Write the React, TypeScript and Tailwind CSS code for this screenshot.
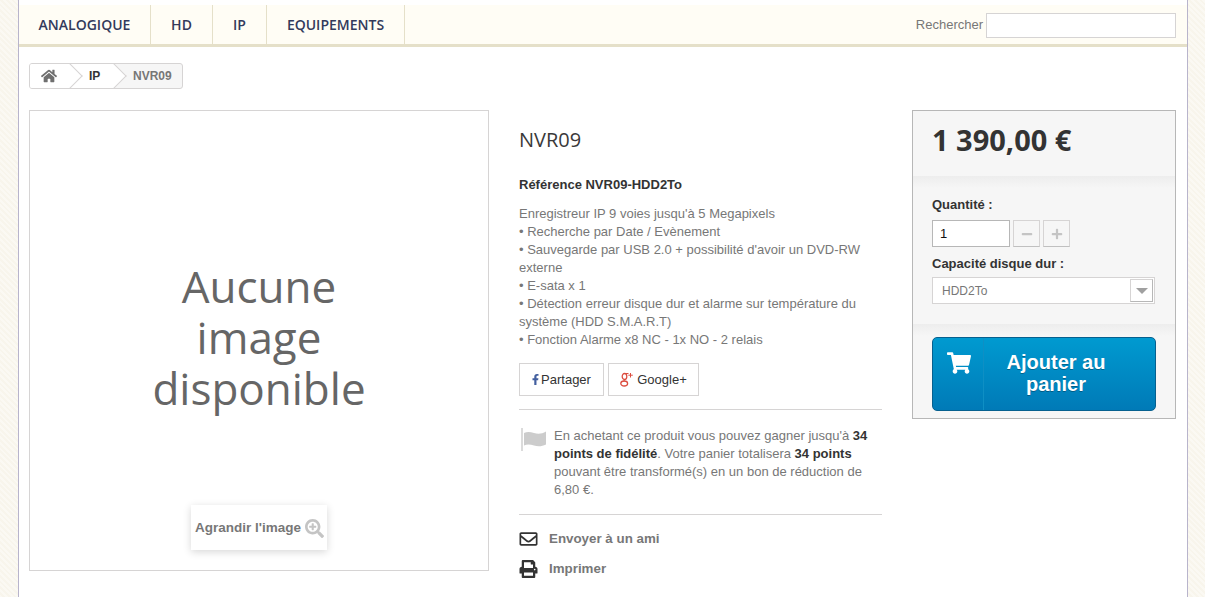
import React from 'react'
import {
  FaHome,
  FaShoppingCart,
  FaFacebookF,
  FaRegEnvelope,
  FaPrint,
  FaSearchPlus,
  FaMinus,
  FaPlus,
} from 'react-icons/fa'

const navItems = [
  { label: 'ANALOGIQUE', width: 'w-[132px]' },
  { label: 'HD', width: 'w-[62px]' },
  { label: 'IP', width: 'w-[54px]' },
  { label: 'EQUIPEMENTS', width: 'w-[138px]' },
]

const description = [
  'Enregistreur IP 9 voies jusqu\'à 5 Megapixels',
  '• Recherche par Date / Evènement',
  '• Sauvegarde par USB 2.0 + possibilité d\'avoir un DVD-RW externe',
  '• E-sata x 1',
  '• Détection erreur disque dur et alarme sur température du système (HDD S.M.A.R.T)',
  '• Fonction Alarme x8 NC - 1x NO - 2 relais',
]

const Nav = () => (
  <div className="flex h-[42px] items-stretch justify-between border-b-[3px] border-[#e5e0c9] bg-[#fffdf5]">
    <ul className="flex">
      {navItems.map((item) => (
        <li
          key={item.label}
          className={`${item.width} flex items-center justify-center border-r border-[#e5e0c9] font-['Open_Sans',sans-serif] text-[14px] font-semibold text-[#333a5c]`}
        >
          {item.label}
        </li>
      ))}
    </ul>
    <div className="mr-[11px] flex items-center gap-[3px] pt-px">
      <span className="text-[13px] text-[#777777]">Rechercher</span>
      <input className="h-[25px] w-[190px] border border-[#d6d4d4] bg-white" />
    </div>
  </div>
)

const Crumb = ({ children, className }: { children: React.ReactNode; className: string }) => (
  <div className={`relative flex h-full items-center ${className}`}>
    {children}
    <span className="absolute right-[-8px] top-[3px] z-10 h-[18px] w-[18px] rotate-45 border-r border-t border-[#d6d4d4] bg-white" />
  </div>
)

const Breadcrumb = () => (
  <div className="mt-[16px] flex h-[26px] w-[154px] items-center overflow-hidden rounded-[3px] border border-[#d6d4d4] bg-[#f6f6f6] text-[12px] font-bold">
    <Crumb className="w-[41px] bg-white pl-[11px] text-[#6f6f6f]">
      <FaHome className="h-[16px] w-[16px]" />
    </Crumb>
    <Crumb className="w-[44px] bg-white pl-[18px] text-[#333333]">IP</Crumb>
    <span className="pl-[18px] text-[#777777]">NVR09</span>
  </div>
)

const ImageColumn = () => (
  <div className="relative flex h-[461px] w-[460px] flex-none items-center justify-center border border-[#d6d4d4] bg-white pb-[7px]">
    <div className="text-center font-['Open_Sans',sans-serif] text-[44px] leading-[51px] text-[#666666]">
      Aucune
      <br />
      image
      <br />
      disponible
    </div>
    <div className="absolute bottom-[20px] left-[161px] flex h-[45px] w-[136px] items-center justify-center gap-[4px] bg-white pl-px pt-px text-[13.5px] font-bold text-[#777777] shadow-[0_2px_8px_rgba(0,0,0,0.16)]">
      Agrandir l'image
      <FaSearchPlus className="h-[19px] w-[19px] text-[#c4c4c4]" />
    </div>
  </div>
)

const FlagIcon = () => (
  <svg viewBox="0 0 27 26" className="h-[26px] w-[27px] flex-none text-[#cccccc]" fill="currentColor">
    <rect x="2" y="1" width="2" height="23" opacity="0.7" />
    <path d="M5 6c3-1.400 6-1.200 10 0 4 1.300 8 1 12-1.500v13c-4 2-8 2.300-12 1-4-1.200-7-1.400-10 0z" />
  </svg>
)

// the old serif g+ mark, none of the icon packs has it
const GooglePlusIcon = () => (
  <svg viewBox="0 0 13 15" className="h-[15px] w-[13px] flex-none text-[#dc4e41]" fill="none" stroke="currentColor">
    <ellipse cx="4.500" cy="4.500" rx="2.300" ry="3" strokeWidth="1.300" />
    <ellipse cx="4.200" cy="11.500" rx="3.400" ry="2.500" strokeWidth="1.300" />
    <path d="M4.500 7.500c-1 .8-.6 1.300.4 1.700M5.500 1.500h3" strokeWidth="1" />
    <path d="M10.500 1v4.500M8.300 3.200h4.500" strokeWidth="1" />
  </svg>
)

const InfoColumn = () => (
  <div className="ml-[30px] w-[363px] flex-none text-[13px] leading-[18px] text-[#777777]">
    <h1 className="mt-[15px] font-['Open_Sans',sans-serif] text-[20px] leading-[30px] text-[#3a3939]">NVR09</h1>
    <p className="mt-[21px] font-bold text-[#333333]">Référence NVR09-HDD2To</p>
    <div className="mt-[11px]">
      {description.map((line) => (
        <div key={line}>{line}</div>
      ))}
    </div>
    <div className="mt-[14px] flex gap-[4px] border-b border-[#d6d4d4] pb-[13px]">
      <button className="flex h-[33px] w-[85px] items-center justify-center gap-[2px] border border-[#d6d4d4] text-[#333333]">
        <FaFacebookF className="h-[13px] w-[7px] text-[#435f9f]" />
        Partager
      </button>
      <button className="flex h-[33px] w-[91px] items-center justify-center gap-[4px] border border-[#d6d4d4] text-[#333333]">
        <GooglePlusIcon />
        Google+
      </button>
    </div>
    <div className="flex gap-[8px] border-b border-[#d6d4d4] pb-[15px] pt-[17px]">
      <FlagIcon />
      <p>
        En achetant ce produit vous pouvez gagner jusqu'à <b className="text-[#333333]">34 points de fidélité</b>. Votre
        panier totalisera <b className="text-[#333333]">34 points</b> pouvant être transformé(s) en un bon de réduction
        de 6,80 €.
      </p>
    </div>
    <div className="mt-[15px] flex items-center gap-[11px] text-[13.35px] font-bold">
      <FaRegEnvelope className="h-[18px] w-[19px] text-[#333333]" />
      Envoyer à un ami
    </div>
    <div className="mt-[12px] flex items-center gap-[11px] text-[13.35px] font-bold">
      <FaPrint className="h-[18px] w-[19px] text-[#333333]" />
      Imprimer
    </div>
  </div>
)

const StepButton = ({ children }: { children: React.ReactNode }) => (
  <span className="flex h-[27px] w-[27px] items-center justify-center border border-[#d6d4d4] border-b-[#c0c0c0] bg-[#f6f6f6] text-[#c4c4c4]">
    {children}
  </span>
)

const BuyBox = () => (
  <div className="ml-[30px] h-[309px] w-[264px] flex-none border border-[#b7b7b7] bg-[#f6f6f6]">
    <div className="h-[65px] pl-[19px] pt-[11px] font-['Open_Sans',sans-serif] text-[29px] font-bold leading-[36px] text-[#333333]">
      1 390,00 €
    </div>
    <div className="h-[148px] bg-[linear-gradient(#ededed,#f6f6f6_12px)] px-[19px] pt-[21px] text-[#333333]">
      <div className="text-[13px] font-bold leading-[16px]">Quantité :</div>
      <div className="mt-[7px] flex gap-[3px]">
        <input
          readOnly
          value="1"
          className="h-[27px] w-[78px] border border-[#b7b7b7] bg-white px-[7px] text-[13px] text-[#111111]"
        />
        <StepButton>
          <FaMinus className="h-[12px] w-[12px]" />
        </StepButton>
        <StepButton>
          <FaPlus className="h-[12px] w-[12px]" />
        </StepButton>
      </div>
      <div className="mt-[9px] text-[13px] font-bold leading-[16px]">Capacité disque dur :</div>
      <div className="mt-[5px] flex h-[27px] w-[223px] items-center justify-between border border-[#d6d4d4] bg-white pl-[9px] pr-px text-[12px] text-[#777777]">
        HDD2To
        <span className="flex h-[23px] w-[23px] items-center justify-center border border-[#d6d4d4] border-b-[#b7b7b7] border-r-[#b7b7b7]">
          <span className="h-0 w-0 border-x-[6px] border-t-[6px] border-x-transparent border-t-[#a0a0a0]" />
        </span>
      </div>
    </div>
    <div className="h-[94px] bg-[linear-gradient(#ededed,#f6f6f6_12px)] px-[19px] pt-[13px]">
      <button className="flex h-[74px] w-[224px] rounded-[5px] border border-[#06608f] bg-[linear-gradient(#009ad0,#007ab7)] text-white">
        <span className="flex h-full w-[51px] flex-none justify-center border-r border-[#0f8fc4] pl-[2px] pt-[13px]">
          <FaShoppingCart className="h-[24px] w-[24px]" />
        </span>
        <span className="flex-1 self-center pb-[2px] pr-[27px] text-center text-[20px] font-bold leading-[22px] [text-shadow:0_1px_0_rgba(0,0,0,0.3)]">
          Ajouter au
          <br />
          panier
        </span>
      </button>
    </div>
  </div>
)

export default function App() {
  return (
    <div className="h-[597px] overflow-hidden bg-[#f8f4ea] bg-[repeating-linear-gradient(45deg,#fbf9f3_0px,#fbf9f3_2px,#f8f5ec_2px,#f8f5ec_4px)] font-['Liberation_Sans',Arial,sans-serif]">
      <div className="ml-[18px] h-full w-[1170px] border-x border-[#b8b4cc] bg-white pt-[5px]">
        <Nav />
        <div className="pl-[10px] pr-[11px]">
          <Breadcrumb />
          <div className="mt-[21px] flex items-start">
            <ImageColumn />
            <InfoColumn />
            <BuyBox />
          </div>
        </div>
      </div>
    </div>
  )
}
